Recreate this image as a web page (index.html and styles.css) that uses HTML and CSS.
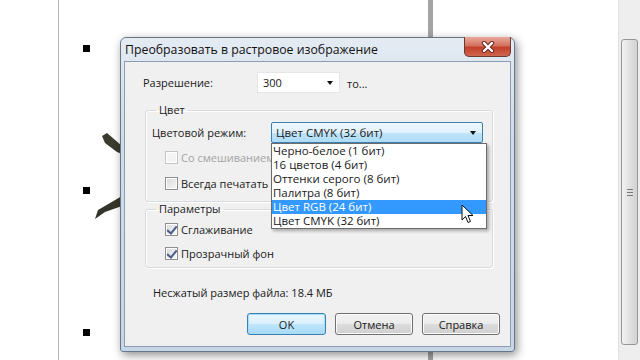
FILE: index.html
```html
<!DOCTYPE html>
<html lang="ru">
<head>
  <meta charset="UTF-8" />
  <title>Преобразовать в растровое изображение</title>
  <link rel="stylesheet" href="styles.css">
</head>
<body>
  <div class="page">
    <div class="sheet">
      <div class="bullets">
        <span class="bullet"></span>
        <span class="bullet"></span>
        <span class="bullet"></span>
      </div>
      <div class="guide"></div>
      <svg class="strokes" width="30" height="90" viewBox="92 130 30 90">
        <polygon points="101,136 106,133 121,146 121,154 116,152 104,143" fill="#3a3a2e" />
        <polygon points="94,219 97,210 121,196 121,206 104,212" fill="#34342a" />
      </svg>
    </div>

    <div class="dlg">
      <div class="dlg-title">
        <span class="dlg-caption">Преобразовать в растровое изображение</span>
        <span class="close-btn">
          <svg width="14" height="12" viewBox="0 0 14 12">
            <path d="M3 2 L11 10 M11 2 L3 10" stroke="#6b2a22" stroke-width="4.4" stroke-linecap="round" />
            <path d="M3 2 L11 10 M11 2 L3 10" stroke="#fff" stroke-width="2.4" stroke-linecap="round" />
          </svg>
        </span>
      </div>

      <div class="dlg-body">
        <div class="row res-row">
          <span class="lbl res-lbl">Разрешение:</span>
          <span class="combo small-combo">300<span class="arrow"></span></span>
          <span class="unit">то...</span>
        </div>

        <fieldset class="group color-group">
          <legend>Цвет</legend>
          <div class="row">
            <span class="lbl mode-lbl">Цветовой режим:</span>
            <div class="combo-wrap">
              <span class="combo mode-combo">Цвет CMYK (32 бит)<span class="arrow"></span></span>
              <ul class="drop-list">
                <li>Черно-белое (1 бит)</li>
                <li>16 цветов (4 бит)</li>
                <li>Оттенки серого (8 бит)</li>
                <li>Палитра (8 бит)</li>
                <li class="sel">Цвет RGB (24 бит)</li>
                <li>Цвет CMYK (32 бит)</li>
              </ul>
            </div>
          </div>
          <label class="check disabled first-check"><span class="box"></span>Со смешиванием</label>
          <label class="check second-check"><span class="box"></span>Всегда печатать</label>
        </fieldset>

        <fieldset class="group opt-group">
          <legend>Параметры</legend>
          <label class="check first-opt"><span class="box checked"></span>Сглаживание</label>
          <label class="check second-opt"><span class="box checked"></span>Прозрачный фон</label>
        </fieldset>

        <div class="size-info">Несжатый размер файла: 18.4 МБ</div>

        <div class="buttons">
          <button class="btn default">OK</button>
          <button class="btn">Отмена</button>
          <button class="btn">Справка</button>
        </div>
      </div>
    </div>

    <svg class="cursor" width="13" height="20" viewBox="0 0 13 20">
      <path d="M1 1 L1 16 L4.5 12.5 L7 18.5 L9.5 17.5 L7 11.5 L12 11.5 Z" fill="#fff" stroke="#111" stroke-width="1" stroke-linejoin="round" />
    </svg>
  </div>

  <div class="scrollbar">
    <div class="thumb"><span class="grip"></span></div>
  </div>
</body>
</html>
```

FILE: styles.css
```css
* {
  box-sizing: border-box;
}
body {
  margin: 0;
  width: 640px;
  height: 360px;
  overflow: hidden;
  display: flex;
  background: #fff;
  font-family: "Open Sans", "Noto Sans", sans-serif;
  font-size: 11px;
  color: #1a1a1a;
}
.page {
  position: relative;
  flex: 1;
  height: 100%;
}
.sheet {
  position: relative;
  margin-left: 58px;
  height: 100%;
  border-left: 1px solid #b4b4b4;
}
.bullets {
  display: flex;
  flex-direction: column;
  gap: 135px;
  padding: 45px 0 0 24px;
}
.bullet {
  width: 7px;
  height: 7px;
  background: #000;
}
.guide {
  position: absolute;
  left: 369px;
  top: 0;
  width: 5px;
  height: 100%;
  background: #a4a4a4;
}
.strokes {
  position: absolute;
  left: 34px;
  top: 130px;
}

/* dialog window */
.dlg {
  position: absolute;
  left: 120px;
  top: 37px;
  width: 395px;
  height: 315px;
  display: flex;
  flex-direction: column;
  padding: 0 3px 4px 3px;
  border: 1px solid #667788;
  border-radius: 6px 6px 3px 3px;
  background: linear-gradient(to bottom, #e4ebf3, #cfdcea 30%, #c7d6e7);
  box-shadow: 2px 3px 10px rgba(0, 0, 0, 0.45);
}
.dlg-title {
  height: 23px;
  display: flex;
  align-items: center;
}
.dlg-caption {
  padding-left: 1px;
  font-size: 12.3px;
  color: #111;
}
.close-btn {
  margin-left: auto;
  align-self: flex-start;
  margin-top: -1px;
  width: 47px;
  height: 20px;
  display: flex;
  align-items: center;
  justify-content: center;
  border: 1px solid #6d3a32;
  border-top: none;
  border-radius: 0 0 5px 5px;
  background: linear-gradient(to bottom, #e9aa9c, #d4715f 45%, #c2412c 55%, #d0664f);
}
.dlg-body {
  flex: 1;
  display: flex;
  flex-direction: column;
  border: 1px solid #8c9db1;
  background: #f0f0f0;
}
.row {
  display: flex;
  align-items: center;
}
.res-row {
  margin-top: 10px;
  padding-left: 18px;
}
.res-lbl {
  width: 114px;
}
.combo {
  position: relative;
  display: flex;
  align-items: center;
  height: 21px;
  padding-left: 5px;
  background: #fff;
}
.small-combo {
  width: 83px;
  border: 1px solid #e6e6e6;
}
.arrow {
  position: absolute;
  right: 6px;
  top: 8px;
  border-left: 3.5px solid transparent;
  border-right: 3.5px solid transparent;
  border-top: 4px solid #111;
}
.unit {
  margin-left: 7px;
  padding-top: 2px;
}
.group {
  margin: 10px 17px 0 20px;
  padding: 5px 6px 10px 6px;
  border: 1px solid #d6dbe0;
  border-radius: 3px;
  box-shadow: inset 1px 1px 0 #fff, 1px 1px 0 #fff;
}
.group legend {
  margin-left: 4px;
  padding: 0 3px;
  line-height: 14px;
}
.mode-lbl {
  width: 119px;
}
.combo-wrap {
  position: relative;
}
.mode-combo {
  width: 212px;
  padding-left: 4px;
  border: 1px solid #3c7fb1;
  border-radius: 2px;
  background: linear-gradient(to bottom, #eef8fe, #dff1fc 50%, #bfe4f9 51%, #aedcf6);
  font-size: 11.5px;
}
.drop-list {
  position: absolute;
  left: 0;
  top: 100%;
  width: 216px;
  margin: 0;
  padding: 0;
  list-style: none;
  background: #fff;
  border: 1px solid #6c6c6c;
  box-shadow: 2px 2px 3px rgba(0, 0, 0, 0.3);
  z-index: 2;
}
.drop-list li {
  height: 14px;
  line-height: 14px;
  padding-left: 1px;
  font-size: 11.5px;
}
.drop-list .sel {
  background: #3399ff;
  color: #fff;
}
.check {
  display: flex;
  align-items: center;
  height: 15px;
  padding-left: 13px;
  white-space: nowrap;
}
.first-check {
  margin-top: 7px;
}
.second-check {
  margin-top: 11px;
}
.first-opt {
  margin-top: 1px;
}
.second-opt {
  margin-top: 9px;
}
.opt-group {
  margin-top: 0;
  padding-bottom: 6px;
}
.box {
  position: relative;
  flex: none;
  width: 13px;
  height: 13px;
  margin-right: 3px;
  border: 1px solid #8f8f8f;
  background: linear-gradient(135deg, #d9d9d9, #f7f7f7);
  box-shadow: inset 0 0 0 1px #fff;
}
.disabled {
  color: #a3a3a3;
}
.disabled .box {
  border-color: #c4c4c4;
  background: #f4f4f4;
}
.box.checked::after {
  content: "";
  position: absolute;
  left: 3px;
  top: 0;
  width: 4px;
  height: 8px;
  border-right: 2px solid #4a5c8c;
  border-bottom: 2px solid #4a5c8c;
  transform: rotate(40deg);
}
.size-info {
  margin-top: 18px;
  padding-left: 28px;
  line-height: 14px;
}
.buttons {
  margin-top: 13px;
  padding-right: 10px;
  display: flex;
  justify-content: flex-end;
  gap: 9px;
}
.btn {
  width: 78px;
  height: 22px;
  padding: 0;
  border: 1px solid #707070;
  border-radius: 3px;
  background: linear-gradient(to bottom, #f2f2f2, #ebebeb 50%, #dddddd 51%, #cfcfcf);
  box-shadow: inset 0 0 0 1px #fbfbfb;
  font-family: inherit;
  font-size: 11px;
  color: #1a1a1a;
}
.btn.default {
  width: 79px;
  border-color: #3c7fb1;
  box-shadow: inset 0 0 0 1px #a9dbf6;
  background: linear-gradient(to bottom, #eaf6fd, #d9f0fc 50%, #bee6fd 51%, #a7d9f5);
}

.cursor {
  position: absolute;
  left: 461px;
  top: 204px;
  z-index: 3;
}

/* page scrollbar */
.scrollbar {
  width: 22px;
  height: 100%;
  padding: 39px 2px 15px 2px;
  background: #eeeeee;
  border-left: 1px solid #e2e2e2;
}
.thumb {
  height: 100%;
  display: flex;
  align-items: center;
  justify-content: center;
  border: 1px solid #979797;
  border-radius: 3px;
  background: linear-gradient(to right, #f2f2f2, #dedede 60%, #d2d2d2);
}
.grip {
  width: 6px;
  height: 7px;
  border-top: 1px solid #777;
  border-bottom: 1px solid #777;
  background: linear-gradient(#777, #777) center / 6px 1px no-repeat;
}
```
